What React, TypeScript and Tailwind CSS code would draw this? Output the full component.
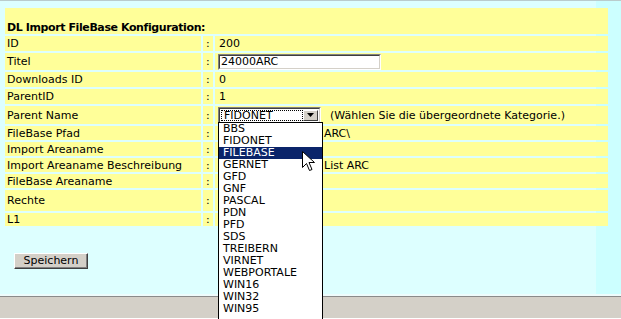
import type { ReactNode } from "react";

const parents = [
  "BBS",
  "FIDONET",
  "FILEBASE",
  "GERNET",
  "GFD",
  "GNF",
  "PASCAL",
  "PDN",
  "PFD",
  "SDS",
  "TREIBERN",
  "VIRNET",
  "WEBPORTALE",
  "WIN16",
  "WIN32",
  "WIN95",
];

const Row = ({ label, h, children }: { label: string; h: string; children?: ReactNode }) => (
  <tr>
    <td className={`${h} bg-[#ffff99] p-0 pl-[2px] align-middle`}>{label}</td>
    <td className="bg-[#ffff99] p-0 pl-[3px] align-middle">:</td>
    <td className="bg-[#ffff99] p-0 pl-[3px] align-middle">{children}</td>
  </tr>
);

const App = () => {
  return (
    <div className="relative flex h-[319px] w-[621px] flex-col overflow-hidden bg-[#ccffff] font-['DejaVu_Sans',Verdana,sans-serif] text-[11px] leading-[13px] text-black">
      <div className="h-px bg-[#b9cccc]" />

      <div className="w-[596px] flex-1 bg-[#ddffff]">
        <table className="mt-[5px] ml-[3px] w-[607px] table-fixed border-separate border-spacing-[2px]">
          <colgroup>
            <col className="w-[196px]" />
            <col className="w-[10px]" />
            <col className="w-[393px]" />
          </colgroup>
          <tbody>
            <tr>
              <td
                colSpan={3}
                className="h-[26px] bg-[#ffff99] p-0 pl-[2px] align-bottom font-bold tracking-[-0.4px]"
              >
                DL Import FileBase Konfiguration:
              </td>
            </tr>
            <Row label="ID" h="h-[15px]">
              <span className="pl-px">200</span>
            </Row>
            <Row label="Titel" h="h-[17px]">
              <div className="h-[16px] w-[163px] border border-t-[#808080] border-r-white border-b-white border-l-[#808080]">
                <div className="h-full border border-t-[#404040] border-r-[#d4d0c8] border-b-[#d4d0c8] border-l-[#404040] bg-white pl-px leading-[12px]">
                  24000ARC
                </div>
              </div>
            </Row>
            <Row label="Downloads ID" h="h-[15px]">
              <span className="pl-px">0</span>
            </Row>
            <Row label="ParentID" h="h-[15px]">
              <span className="pl-px">1</span>
            </Row>
            <Row label="Parent Name" h="h-[18px]">
              <div className="flex items-center">
                <div className="h-[17px] w-[103px] border border-t-[#808080] border-r-white border-b-white border-l-[#808080]">
                  <div className="flex h-full border border-t-[#404040] border-r-[#d4d0c8] border-b-[#d4d0c8] border-l-[#404040] bg-white p-px">
                    <div className="flex-1 border border-dotted border-black pl-[2px] leading-[10px]">FIDONET</div>
                    <div className="flex w-[15px] items-center justify-center border border-t-white border-r-[#404040] border-b-[#404040] border-l-white bg-[#d4d0c8]">
                      <svg width="7" height="4" viewBox="0 0 7 4">
                        <path d="M0 0h7L3.5 4z" fill="#000" />
                      </svg>
                    </div>
                  </div>
                </div>
                <span className="ml-[9px]">(Wählen Sie die übergeordnete Kategorie.)</span>
              </div>
            </Row>
            <Row label="FileBase Pfad" h="h-[14px]">
              <span className="pl-[106px]">ARC\</span>
            </Row>
            <Row label="Import Areaname" h="h-[14px]" />
            <Row label="Import Areaname Beschreibung" h="h-[14px]">
              <span className="pl-[106px]">List ARC</span>
            </Row>
            <Row label="FileBase Areaname" h="h-[14px]" />
            <Row label="Rechte" h="h-[21px]" />
            <Row label="L1" h="h-[13px]" />
          </tbody>
        </table>

        <button className="mt-[25px] ml-[14px] h-[16px] w-[74px] border border-t-white border-r-[#404040] border-b-[#404040] border-l-white bg-[#d4d0c8] p-0 text-[11px] leading-[12px] shadow-[inset_-1px_-1px_0_#808080]">
          Speichern
        </button>
      </div>

      <div className="h-[2px] bg-[#eefcfc]" />
      <div className="h-[23px] border-t border-b border-t-[#8a8a8a] border-b-white bg-[#d4d0c8]" />

      {/* offene Auswahlliste */}
      <div className="absolute top-[122px] left-[218px] h-[210px] w-[105px] border border-black bg-white">
        {parents.map((p) => (
          <div
            key={p}
            className={
              p === "FILEBASE"
                ? "h-[12px] bg-[#0a246a] pl-[4px] leading-[12px] text-white"
                : "h-[12px] pl-[4px] leading-[12px]"
            }
          >
            {p}
          </div>
        ))}
      </div>

      <svg className="absolute top-[151px] left-[302px]" width="13" height="21" viewBox="0 0 13 21">
        <path d="M0.5 0.5v16l4-4 3 7 2.5-1-3-7h5.5z" fill="#fff" stroke="#000" strokeWidth="1" />
      </svg>
    </div>
  );
};

export default App;
